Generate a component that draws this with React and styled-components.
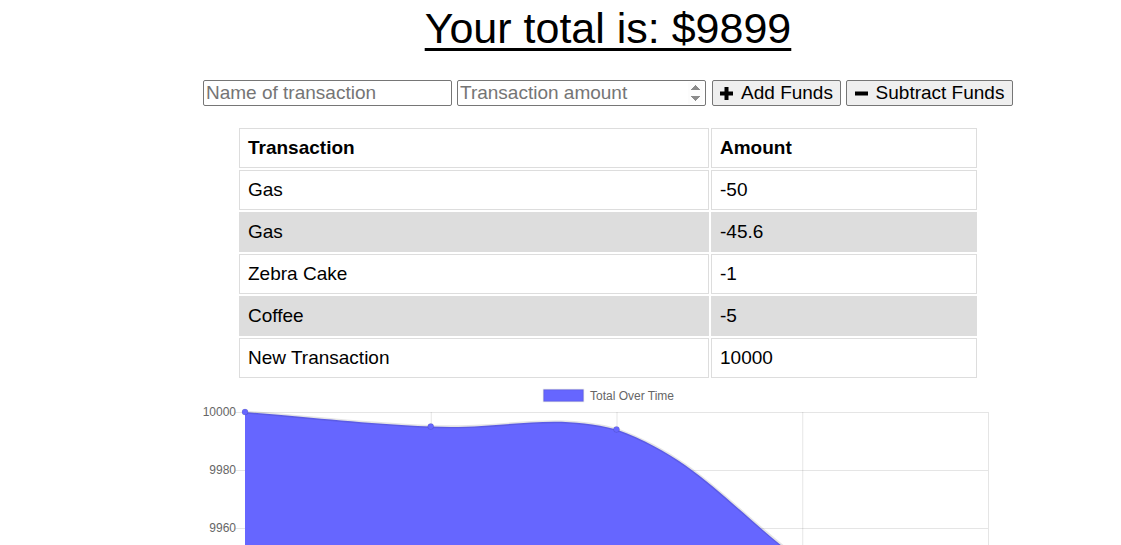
import React from "react";
import styled, { createGlobalStyle } from "styled-components";

const Global = createGlobalStyle`
  html, body { margin: 0; padding: 0; overflow: hidden; background: #fff; }
  body { font-family: "Liberation Sans", Arial, sans-serif; color: #000; }
`;

const Page = styled.div`
  width: 1216px;
  display: flex;
  flex-direction: column;
  align-items: center;
`;

const Title = styled.h1`
  margin: 4px 0 0;
  font-size: 43px;
  font-weight: 400;
  line-height: 49px;
  text-decoration: underline;
  text-decoration-thickness: 3px;
  text-underline-offset: 5px;
`;

const Form = styled.div`
  display: flex;
  align-items: center;
  gap: 5px;
  margin-top: 27px;
  height: 26px;
`;

const Field = styled.input`
  box-sizing: border-box;
  width: 249px;
  height: 26px;
  margin: ${(p) => (p.$gapRight ? "0 1px 0 0" : "0")};
  padding: 1px 2px;
  border: 1px solid #767676;
  border-radius: 2px;
  font-family: "Liberation Sans", Arial, sans-serif;
  font-size: 19px;
  color: #000;
  background: #fff;
  &::placeholder { color: #757575; }
  &::-webkit-inner-spin-button { opacity: 1; }
`;

const Button = styled.button`
  box-sizing: border-box;
  height: 26px;
  width: ${(p) => p.$w}px;
  padding: 0 6px;
  display: inline-flex;
  align-items: center;
  justify-content: center;
  gap: 8px;
  border: 1px solid #767676;
  border-radius: 2px;
  background: #efefef;
  font-family: "Liberation Sans", Arial, sans-serif;
  font-size: 19px;
  color: #000;
  white-space: nowrap;
  svg { flex: none; }
`;

const Table = styled.table`
  margin-top: 20px;
  width: 742px;
  border-collapse: separate;
  border-spacing: 2px;
  table-layout: fixed;
  font-size: 19px;
`;

const Head = styled.th`
  text-align: left;
  font-weight: 700;
  border: 1px solid #dddddd;
  padding: 8px;
  height: 22px;
  line-height: 22px;
`;

const Row = styled.tr`
  background: ${(p) => (p.$striped ? "#dddddd" : "#ffffff")};
`;

const Cell = styled.td`
  border: 1px solid #dddddd;
  padding: 8px;
  height: 22px;
  line-height: 22px;
`;

const ChartBox = styled.div`
  width: 820px;
  height: 420px;
  flex: none;
`;

const PlusIcon = () => (
  <svg width="13" height="13" viewBox="0 0 13 13">
    <rect x="4.5" y="0" width="4" height="13" fill="#000" />
    <rect x="0" y="4.5" width="13" height="4" fill="#000" />
  </svg>
);

const MinusIcon = () => (
  <svg width="13" height="13" viewBox="0 0 13 13">
    <rect x="0" y="4.5" width="13" height="4" fill="#000" />
  </svg>
);

const rows = [
  ["Gas", "-50"],
  ["Gas", "-45.6"],
  ["Zebra Cake", "-1"],
  ["Coffee", "-5"],
  ["New Transaction", "10000"],
];

const AX = 47;
const TOP = 32;
const RIGHT = 790;
const BOTTOM = 380;
const STEP = (RIGHT - AX) / 4;
const PX = 2.9;
const values = [10000, 9995, 9994, 9948.4, 9898.4];

function buildPath() {
  const pts = values.map((v, i) => ({ x: AX + i * STEP, y: TOP + (10000 - v) * PX }));
  const t = 0.4;
  const cps = pts.map((p, i) => {
    const p0 = pts[i - 1] || p;
    const p2 = pts[i + 1] || p;
    const d01 = Math.hypot(p.x - p0.x, p.y - p0.y);
    const d12 = Math.hypot(p2.x - p.x, p2.y - p.y);
    let s01 = d01 / (d01 + d12);
    let s12 = d12 / (d01 + d12);
    if (isNaN(s01)) s01 = 0;
    if (isNaN(s12)) s12 = 0;
    const fa = t * s01;
    const fb = t * s12;
    const clampY = (y) => Math.max(TOP, Math.min(BOTTOM, y));
    return {
      prev: { x: p.x - fa * (p2.x - p0.x), y: clampY(p.y - fa * (p2.y - p0.y)) },
      next: { x: p.x + fb * (p2.x - p0.x), y: clampY(p.y + fb * (p2.y - p0.y)) },
    };
  });
  let d = `M${pts[0].x},${pts[0].y}`;
  for (let i = 1; i < pts.length; i++) {
    const a = cps[i - 1].next;
    const b = cps[i].prev;
    d += ` C${a.x},${a.y} ${b.x},${b.y} ${pts[i].x},${pts[i].y}`;
  }
  return { d, pts };
}

function Chart() {
  const { d, pts } = buildPath();
  const ticks = [10000, 9980, 9960, 9940, 9920, 9900, 9880];
  const fillD = `${d} L${RIGHT},${BOTTOM} L${AX},${BOTTOM} Z`;
  return (
    <ChartBox>
      <svg width="820" height="420" viewBox="0 0 820 420" fontFamily="Liberation Sans, Arial, sans-serif">
        <rect x="345.5" y="9.5" width="40" height="12" fill="#6666ff" stroke="rgba(0,0,0,0.1)" strokeWidth="1.5" />
        <text x="392" y="19.5" fontSize="12" fill="#666">Total Over Time</text>
        {ticks.map((v) => {
          const y = TOP + (10000 - v) * PX;
          return (
            <g key={v}>
              <line x1="37" x2={RIGHT} y1={y + 0.5} y2={y + 0.5} stroke="rgba(0,0,0,0.1)" />
              <text x="38" y={y + 4} fontSize="12" fill="#666" textAnchor="end">{v}</text>
            </g>
          );
        })}
        {[0, 1, 2, 3, 4].map((i) => (
          <line key={i} x1={AX + i * STEP + 0.5} x2={AX + i * STEP + 0.5} y1={TOP} y2={BOTTOM + 8} stroke="rgba(0,0,0,0.1)" />
        ))}
        <path d={fillD} fill="#6666ff" />
        <path d={d} fill="none" stroke="rgba(0,0,0,0.1)" strokeWidth="3" />
        {pts.map((p, i) => (
          <circle key={i} cx={p.x} cy={p.y} r="3" fill="#6666ff" stroke="rgba(0,0,0,0.1)" strokeWidth="1" />
        ))}
      </svg>
    </ChartBox>
  );
}

export default function App() {
  return (
    <>
      <Global />
      <Page>
        <Title>Your total is: $9899</Title>
        <Form>
          <Field type="text" placeholder="Name of transaction" />
          <Field type="number" placeholder="Transaction amount" $gapRight />
          <Button $w={129}>
            <PlusIcon /> Add Funds
          </Button>
          <Button $w={167}>
            <MinusIcon /> Subtract Funds
          </Button>
        </Form>
        <Table>
          <colgroup>
            <col style={{ width: 470 }} />
            <col />
          </colgroup>
          <thead>
            <tr>
              <Head>Transaction</Head>
              <Head>Amount</Head>
            </tr>
          </thead>
          <tbody>
            {rows.map(([n, a], i) => (
              <Row key={i} $striped={i % 2 === 1}>
                <Cell>{n}</Cell>
                <Cell>{a}</Cell>
              </Row>
            ))}
          </tbody>
        </Table>
        <Chart />
      </Page>
    </>
  );
}
